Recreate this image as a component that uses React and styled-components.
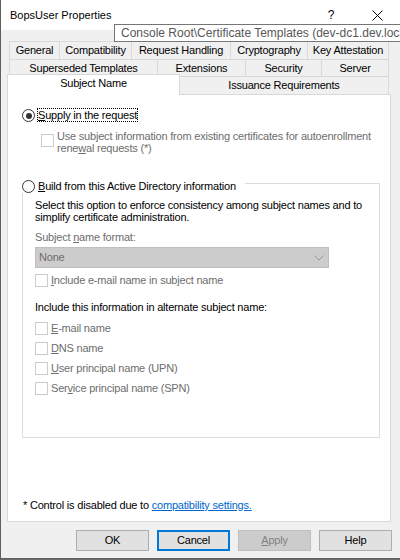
import React from 'react';
import styled, { createGlobalStyle, css } from 'styled-components';

const GlobalStyle = createGlobalStyle`
  * { box-sizing: border-box; }
  html, body { margin: 0; padding: 0; width: 400px; height: 560px; overflow: hidden; background: #6b6b6b; }
  #root { width: 400px; height: 560px; }
`;

const Window = styled.div`
  position: relative;
  width: 400px;
  height: 559px;
  background: #f0f0f0;
  border-left: 1px solid #5f5f5f;
  border-bottom: 1px solid #5f5f5f;
  display: flex;
  flex-direction: column;
  overflow: hidden;
  font-family: "Liberation Sans", Arial, sans-serif;
  font-size: 11px;
  letter-spacing: -0.2px;
  color: #000;
`;

const TitleBar = styled.div`
  flex: none;
  height: 30px;
  background: #fff;
  display: flex;
  align-items: center;
  padding-left: 9px;
`;

const Title = styled.span`
  flex: 1;
  font-size: 11px;
  letter-spacing: 0;
  line-height: 13px;
`;

const CaptionButton = styled.span`
  width: 46px;
  height: 30px;
  display: flex;
  align-items: center;
  justify-content: center;
  font-size: 12px;
  letter-spacing: 0;
`;

const Tooltip = styled.div`
  position: absolute;
  left: 113px;
  top: 24px;
  height: 18px;
  padding: 0 6px;
  border: 1px solid #767676;
  background: #fff;
  color: #575757;
  font-size: 12px;
  letter-spacing: 0;
  line-height: 16px;
  white-space: nowrap;
  z-index: 5;
`;

const TabStrip = styled.div`
  flex: none;
  margin: 11px 0 0 8px;
  display: flex;
  flex-direction: column;
`;

const TabRow = styled.div`
  display: flex;
  align-items: flex-end;
  height: ${p => p.$h}px;
`;

const Tab = styled.div`
  flex: none;
  width: ${p => p.$w}px;
  height: ${p => p.$h}px;
  border: 1px solid #d9d9d9;
  border-bottom: none;
  background: #f0f0f0;
  text-align: center;
  line-height: ${p => p.$h - 1}px;
  white-space: nowrap;
  & + & { margin-left: -1px; }
  ${p => p.$selected && css`
    position: relative;
    z-index: 1;
    height: 21px;
    margin-bottom: -1px;
    margin-left: -2px;
    background: #fff;
    line-height: 17px;
    & + & { margin-left: -1px; }
  `}
`;

const Panel = styled.div`
  flex: none;
  height: 428px;
  margin: 0 9px 0 6px;
  background: #fff;
  border: 1px solid #d9d9d9;
  display: flex;
  flex-direction: column;
  padding: 13px 0 9px 14px;
`;

const RadioRow = styled.div`
  display: flex;
  align-items: flex-start;
  gap: 2px;
  height: 14px;
`;

const RadioCircle = styled.span`
  flex: none;
  width: 13px;
  height: 13px;
  margin-top: 1px;
  border-radius: 50%;
  border: 1px solid #333;
  background: #fff;
  display: flex;
  align-items: center;
  justify-content: center;
  &::after {
    content: '';
    display: ${p => (p.$checked ? 'block' : 'none')};
    width: 6px;
    height: 6px;
    border-radius: 50%;
    background: #333;
  }
`;

const RadioLabel = styled.span`
  height: 14px;
  line-height: 12px;
  border: 1px ${p => (p.$focus ? 'dotted #000' : 'solid transparent')};
  white-space: nowrap;
`;

const CheckRow = styled.div`
  display: flex;
  align-items: flex-start;
  gap: 3px;
  margin-top: ${p => p.$mt || 0}px;
  margin-left: ${p => p.$ml || 0}px;
  color: ${p => (p.$disabled ? '#6d6d6d' : '#000')};
  line-height: ${p => p.$lh || 13}px;
`;

const Box = styled.span`
  flex: none;
  width: 13px;
  height: 13px;
  margin-top: ${p => p.$mt || 0}px;
  border: 1px solid ${p => (p.$disabled ? '#cccccc' : '#333')};
  background: #fff;
`;

const GroupBox = styled.div`
  margin: 29px 10px 0 0;
  border: 1px solid #dcdcdc;
  display: flex;
  flex-direction: column;
`;

const GroupHeader = styled.div`
  width: fit-content;
  margin: -5px 0 0 -1px;
  padding-right: 8px;
  background: #fff;
`;

const GroupBody = styled.div`
  padding: 6px 12px 42px 12px;
  display: flex;
  flex-direction: column;
`;

const Text = styled.div`
  line-height: ${p => p.$lh || 13}px;
  margin-top: ${p => p.$mt || 0}px;
  color: ${p => (p.$disabled ? '#6d6d6d' : '#000')};
  white-space: nowrap;
`;

const Combo = styled.div`
  width: 294px;
  height: 21px;
  margin-top: 3px;
  background: #cccccc;
  border: 1px solid #bfbfbf;
  color: #6d6d6d;
  display: flex;
  align-items: center;
  justify-content: space-between;
  padding: 0 4px 0 3px;
  line-height: 13px;
`;

const CheckList = styled.div`
  display: flex;
  flex-direction: column;
  gap: 7px;
  margin-top: 8px;
`;

const Footer = styled.div`
  margin-top: auto;
  padding-left: 1px;
  line-height: 13px;
  white-space: nowrap;
`;

const Link = styled.a`
  color: #0066cc;
  text-decoration: underline;
  cursor: pointer;
`;

const ButtonBar = styled.div`
  flex: none;
  display: flex;
  justify-content: flex-end;
  gap: 8px;
  margin-top: 8px;
  padding-right: 8px;
`;

const Button = styled.button`
  width: 73px;
  height: 21px;
  padding: 0;
  margin: 0;
  border: 1px solid #adadad;
  background: #e1e1e1;
  font-family: "Liberation Sans", Arial, sans-serif;
  font-size: 11px;
  letter-spacing: -0.2px;
  line-height: 19px;
  color: #000;
  ${p => p.$default && css`
    border-color: #0078d7;
    box-shadow: inset 0 0 0 1px #0078d7;
  `}
  &:disabled {
    background: #cccccc;
    border-color: #bfbfbf;
    color: #838383;
  }
`;

const rows = [
  { h: 18, tabs: [['General', 51], ['Compatibility', 73], ['Request Handling', 100], ['Cryptography', 78], ['Key Attestation', 82]] },
  { h: 17, tabs: [['Superseded Templates', 149], ['Extensions', 89], ['Security', 77], ['Server', 68]] },
  { h: 18, tabs: [['Subject Name', 173, true], ['Issuance Requirements', 210]] },
];

const altNames = [
  [<u key="e">E</u>, '-mail name'],
  [<u key="d">D</u>, 'NS name'],
  [<u key="u">U</u>, 'ser principal name (UPN)'],
  ['Ser', <u key="v">v</u>, 'ice principal name (SPN)'],
];

export default function App() {
  return (
    <>
      <GlobalStyle />
      <Window>
        <TitleBar>
          <Title>BopsUser Properties</Title>
          <CaptionButton>?</CaptionButton>
          <CaptionButton>
            <svg width="11" height="11" viewBox="0 0 11 11">
              <path d="M0.5 0.5 L10.5 10.5 M10.5 0.5 L0.5 10.5" stroke="#000" strokeWidth="1" fill="none" />
            </svg>
          </CaptionButton>
        </TitleBar>
        <Tooltip>Console Root\Certificate Templates (dev-dc1.dev.local)</Tooltip>

        <TabStrip>
          {rows.map((r, i) => (
            <TabRow key={i} $h={r.h}>
              {r.tabs.map(([label, w, sel]) => (
                <Tab key={label} $w={w} $h={r.h} $selected={sel}>{label}</Tab>
              ))}
            </TabRow>
          ))}
        </TabStrip>

        <Panel>
          <RadioRow>
            <RadioCircle $checked />
            <RadioLabel $focus><u>S</u>upply in the request</RadioLabel>
          </RadioRow>
          <CheckRow $mt={8} $ml={19} $lh={12} $disabled>
            <Box $mt={4} $disabled />
            <span>
              Use subject information from existing certificates for autoenrollment<br />
              rene<u>w</u>al requests (*)
            </span>
          </CheckRow>

          <GroupBox>
            <GroupHeader>
              <RadioRow>
                <RadioCircle />
                <RadioLabel><u>B</u>uild from this Active Directory information</RadioLabel>
              </RadioRow>
            </GroupHeader>
            <GroupBody>
              <Text $lh={12}>
                Select this option to enforce consistency among subject names and to<br />
                simplify certificate administration.
              </Text>
              <Text $mt={8} $disabled>Subject <u>n</u>ame format:</Text>
              <Combo>
                <span>None</span>
                <svg width="10" height="6" viewBox="0 0 10 6">
                  <path d="M0.5 0.5 L5 5 L9.5 0.5" stroke="#9a9a9a" strokeWidth="1" fill="none" />
                </svg>
              </Combo>
              <CheckRow $mt={6} $disabled>
                <Box $disabled />
                <span><u>I</u>nclude e-mail name in subject name</span>
              </CheckRow>
              <Text $mt={14}>Include this information in alternate subject name:</Text>
              <CheckList>
                {altNames.map((parts, i) => (
                  <CheckRow key={i} $disabled>
                    <Box $disabled />
                    <span>{parts}</span>
                  </CheckRow>
                ))}
              </CheckList>
            </GroupBody>
          </GroupBox>

          <Footer>
            * Control is disabled due to <Link>compatibility settings.</Link>
          </Footer>
        </Panel>

        <ButtonBar>
          <Button>OK</Button>
          <Button $default>Cancel</Button>
          <Button disabled><u>A</u>pply</Button>
          <Button>Help</Button>
        </ButtonBar>
      </Window>
    </>
  );
}
